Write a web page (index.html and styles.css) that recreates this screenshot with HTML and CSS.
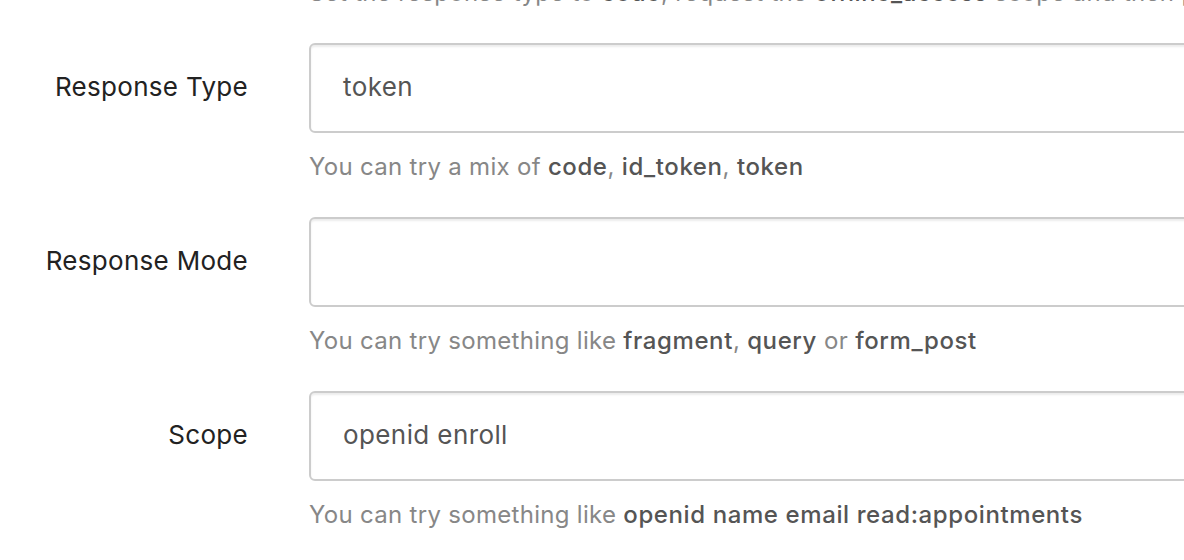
FILE: index.html
```html
<!DOCTYPE html>
<html>
<head>
<meta charset="utf-8">
<link rel="stylesheet" href="styles.css">
</head>
<body>
<div class="form">
  <p class="help lead">Set the response type to <b>code</b>, request the <b>offline_access</b> scope and then provide the authorization code below to exchange it</p>
  <div class="row">
    <label class="label">Response Type</label>
    <div class="field">
      <div class="input">token</div>
      <p class="help">You can try a mix of <b>code</b>, <b>id_token</b>, <b>token</b></p>
    </div>
  </div>
  <div class="row">
    <label class="label">Response Mode</label>
    <div class="field">
      <div class="input"></div>
      <p class="help">You can try something like <b>fragment</b>, <b>query</b> or <b>form_post</b></p>
    </div>
  </div>
  <div class="row">
    <label class="label">Scope</label>
    <div class="field">
      <div class="input">openid enroll</div>
      <p class="help">You can try something like <b>openid name email read:appointments</b></p>
    </div>
  </div>
</div>
</body>
</html>
```
FILE: styles.css
```css
html, body {
  margin: 0;
  padding: 0;
  background: #fff;
  overflow: hidden;
  width: 1184px;
  height: 560px;
}
body {
  font-family: Inter, "Noto Sans", sans-serif;
  font-size: 24px;
}
.form {
  display: flex;
  flex-direction: column;
  margin-top: -24px;
}
.lead {
  margin-left: 309px !important;
  margin-top: 0 !important;
}
.row {
  display: grid;
  grid-template-columns: 248px 1000px;
  column-gap: 61px;
  align-items: start;
}
.label {
  box-sizing: border-box;
  height: 90px;
  padding-bottom: 3px;
  display: flex;
  align-items: center;
  justify-content: flex-end;
  color: #222;
  font-size: 26px;
  letter-spacing: 0.3px;
}
.field {
  display: flex;
  flex-direction: column;
}
.input {
  box-sizing: border-box;
  height: 90px;
  width: 1000px;
  border: 2px solid #cccccc;
  border-radius: 6px;
  box-shadow: inset 0 2px 2px rgba(0,0,0,0.075);
  padding: 0 32px 3px;
  display: flex;
  align-items: center;
  color: #555;
  font-size: 26px;
  letter-spacing: 0.4px;
}
.help {
  margin: 17px 0 33px;
  line-height: 34px;
  height: 34px;
  color: #878787;
  white-space: nowrap;
  font-size: 24px;
  letter-spacing: 0.3px;
}
.help b {
  color: #555;
  font-weight: 500;
  letter-spacing: 0.6px;
}
```
